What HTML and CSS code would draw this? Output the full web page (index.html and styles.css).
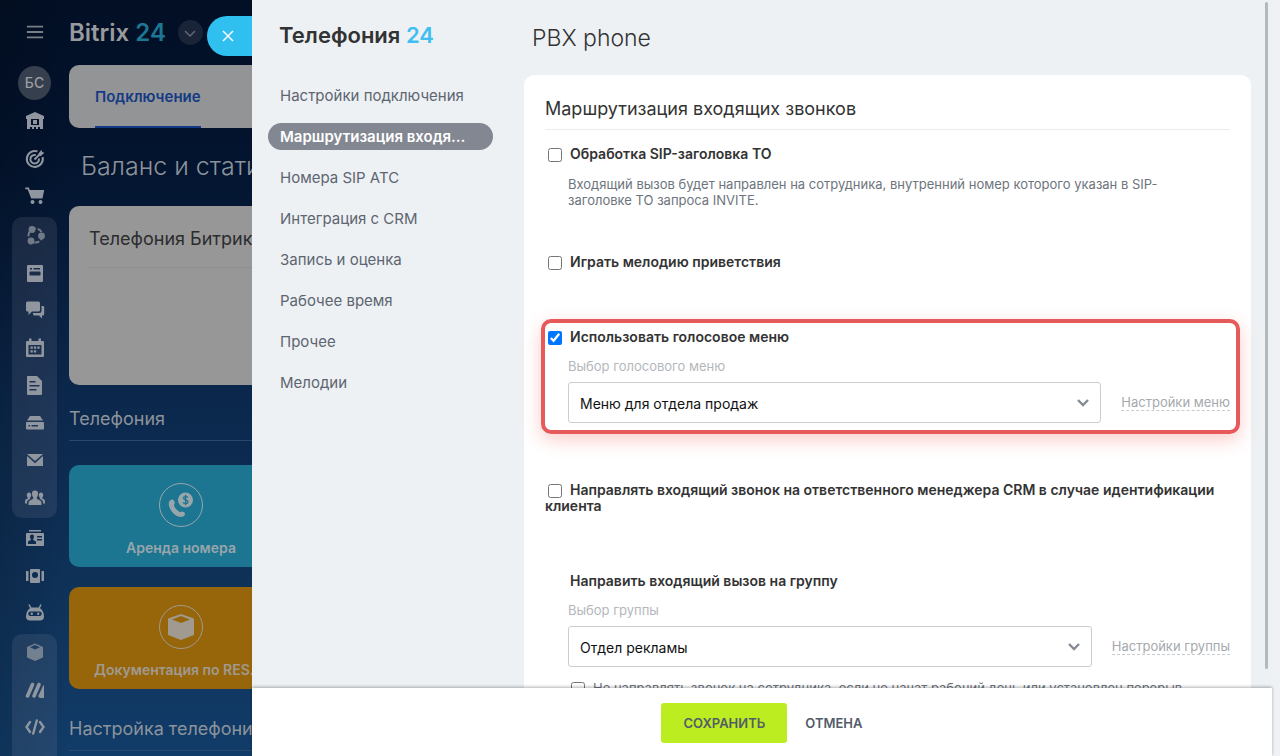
FILE: index.html
```html
<!DOCTYPE html>
<html lang="ru">

<head>
    <meta charset="UTF-8">
    <title>Телефония 24</title>
    <link rel="stylesheet" href="styles.css">
</head>

<body>
    <nav class="rail">
        <button class="rail-burger" aria-label="Меню">
            <svg viewBox="0 0 20 20"><path d="M1 4h18M1 10h18M1 16h18" fill="none" stroke="currentColor" stroke-width="2"/></svg>
        </button>
        <div class="rail-avatar">БС</div>

        <div class="rail-top">
            <a href="#" aria-label="Компания"><svg viewBox="0 0 20 20"><path fill-rule="evenodd" d="M10 1 19 5v3h-1v10h-3v-2h-2v2h-2v-2H9v2H7v-2H5v2H2V8H1V5zM6 8v6h8V8zM8 9h4v4H8z"/></svg></a>
            <a href="#" aria-label="Цели"><svg viewBox="0 0 20 20"><g fill="none" stroke="currentColor" stroke-width="2"><path d="M12.500 2.400A8 8 0 1 0 17.600 8"/><path d="M10.800 6.100A4.300 4.300 0 1 0 13.900 9.500"/><path d="M9.500 10.500 17 3"/></g><path d="M13.500 4.500 16.500.8l.6 2.300 2.300.6-3.500 3.200-2.200-.2z"/></svg></a>
            <a href="#" aria-label="Магазин"><svg viewBox="0 0 20 20"><path d="M.3 1.500H3.800L4.800 4h14.400l-1.700 8.500H6.200L2.600 3.200H.3z"/><circle cx="7.500" cy="16" r="2"/><circle cx="15.500" cy="16" r="2"/></svg></a>
        </div>

        <div class="rail-group rail-group-tools">
            <a href="#" class="dim" aria-label="Группы"><svg viewBox="0 0 20 20"><circle cx="10.500" cy="10.500" r="7" fill="none" stroke="currentColor" stroke-width="2" stroke-dasharray="5 2"/><circle cx="7" cy="4.500" r="3.400"/><circle cx="16.500" cy="11" r="3.400"/><circle cx="6" cy="16" r="3.400"/></svg></a>
            <a href="#" aria-label="Лента"><svg viewBox="0 0 20 20"><path fill-rule="evenodd" d="M3 2h14a1 1 0 0 1 1 1v15a1 1 0 0 1-1 1H3a1 1 0 0 1-1-1V3a1 1 0 0 1 1-1zM5 5v1.500h2V5zM8.500 5v1.500H15V5zM5.500 8.500a1 1 0 0 0-1 1v2a1 1 0 0 0 1 1h9a1 1 0 0 0 1-1v-2a1 1 0 0 0-1-1z"/></svg></a>
            <a href="#" aria-label="Чат"><svg viewBox="0 0 20 20"><path d="M2.500 1.500h11a1.500 1.500 0 0 1 1.500 1.500v7a1.500 1.500 0 0 1-1.500 1.500H7L3.500 15v-3.500h-1A1.500 1.500 0 0 1 1 10V3a1.500 1.500 0 0 1 1.500-1.500z"/><path d="M16.500 6H18a1.200 1.200 0 0 1 1.200 1.200V14a1.500 1.500 0 0 1-1.500 1.500h-.7v3l-3-3H9.500A1.500 1.500 0 0 1 8 14v-1h6.500a2 2 0 0 0 2-2z"/></svg></a>
            <a href="#" aria-label="Календарь"><svg viewBox="0 0 20 20"><path fill-rule="evenodd" d="M4 .5h2.500V3h7V.5H16V3h2a1 1 0 0 1 1 1v14a1 1 0 0 1-1 1H2a1 1 0 0 1-1-1V4a1 1 0 0 1 1-1h2zM3.500 7v9.500h13V7z"/><path d="M5.500 8.500h2.300v2.300H5.500zM8.900 8.500h2.300v2.300H8.900zM12.300 8.500h2.300v2.300h-2.300zM5.500 12.200h2.300v2.300H5.500zM8.900 12.200h2.300v2.300H8.900z"/></svg></a>
            <a href="#" aria-label="Документы"><svg viewBox="0 0 20 20"><path fill-rule="evenodd" d="M2 1h10l5 5v13a1 1 0 0 1-1 1H3a1 1 0 0 1-1-1zM4.500 6v1.500h6V6zM4.500 10v1.500h10V10zM4.500 14v1.500h7V14z"/></svg></a>
            <a href="#" aria-label="Диск"><svg viewBox="0 0 20 20"><path d="M5 3h10l3 4.500H2z"/><path fill-rule="evenodd" d="M2 9h16a1 1 0 0 1 1 1v5.500a1 1 0 0 1-1 1H2a1 1 0 0 1-1-1V10a1 1 0 0 1 1-1zM3.500 12v1.500H5V12zM6.500 12v1.500H13V12z"/></svg></a>
            <a href="#" aria-label="Почта"><svg viewBox="0 0 20 20"><path d="M2 4h16l-8 7z"/><path d="M2 6v10h16V6l-8 7.200z"/></svg></a>
            <a href="#" aria-label="Сотрудники"><svg viewBox="0 0 20 20"><path d="M10 2.500a3 3 0 0 1 3 3.200c0 1.800-.6 2.800-1.200 3.500v1.500l3.700 2c.8.500 1 1.200 1 4.300h-13c0-3.100.2-3.800 1-4.300l3.700-2V9.200C7.600 8.500 7 7.500 7 5.700a3 3 0 0 1 3-3.200z"/><path d="M4 4.500c1.500 0 2.200 1 2.200 2.500 0 1.300-.5 2-1 2.500v1.300L3 12.300c-.9.700-1 1.500-1 3.200H0c0-3 .1-3.800 1-4.200l1.700-.9v-1C2.200 8.900 1.800 8.200 1.800 7c0-1.500.7-2.500 2.200-2.500zM16 4.500c1.500 0 2.200 1 2.200 2.500 0 1.200-.4 1.900-.9 2.400v1l1.700.9c.9.400 1 1.200 1 4.200h-2c0-1.700-.1-2.500-1-3.200l-2.200-1.500V9.500c-.5-.5-1-1.200-1-2.500 0-1.500.7-2.500 2.200-2.500z"/></svg></a>
        </div>

        <div class="rail-middle">
            <a href="#" aria-label="Контакты"><svg viewBox="0 0 20 20"><path d="M4 2h12v1.500H4z"/><path fill-rule="evenodd" d="M2 5h16a1 1 0 0 1 1 1v11a1 1 0 0 1-1 1H2a1 1 0 0 1-1-1V6a1 1 0 0 1 1-1zM7 6.500a2 2 0 0 0-2 2.200c0 1 .3 1.700.8 2.200v1L3 13.500V16h8v-2.500l-2.800-1.600v-1c.5-.5.8-1.200.8-2.200a2 2 0 0 0-2-2.200zM12 8v1.500h5V8zM12 11v1.500h5V11z"/></svg></a>
            <a href="#" aria-label="Витрина"><svg viewBox="0 0 20 20"><path fill-rule="evenodd" d="M6 3h8a1 1 0 0 1 1 1v12a1 1 0 0 1-1 1H6a1 1 0 0 1-1-1V4a1 1 0 0 1 1-1zM10 6a3 3 0 1 0 0 6 3 3 0 0 0 0-6z"/><path d="M1 5h2.500v10H1zM16.500 5H19v10h-2.500z"/></svg></a>
            <a href="#" aria-label="Роботы"><svg viewBox="0 0 20 20"><path d="M4 1.500 6 5.500M16 1.500l-2 4" stroke="currentColor" stroke-width="1.500"/><path fill-rule="evenodd" d="M6 4.500h8c3 1.500 5 5 5 9 0 2.500-1.500 4-4 4H5c-2.500 0-4-1.500-4-4 0-4 2-7.500 5-9zM5.500 8.500a2.200 2.200 0 0 0 0 4.500h9a2.200 2.200 0 0 0 0-4.500z"/><circle cx="6.800" cy="10.700" r="1.200"/><circle cx="13.200" cy="10.700" r="1.200"/></svg></a>
        </div>

        <div class="rail-group rail-group-apps">
            <a href="#" class="dim" aria-label="Маркет"><svg viewBox="0 0 20 20"><path fill-rule="evenodd" d="M10 1.500 18 5v10.500L10 19l-8-3.500V5zM10 3 5 5.200l5 2.300 5-2.300z"/></svg></a>
            <a href="#" aria-label="Сайты"><svg viewBox="0 0 20 20"><path d="M2.500 16 7.500 4.500M9 16 14 4.500" stroke="currentColor" stroke-width="3.600" stroke-linecap="round"/><path d="M13.500 15.500 18 6c.8-1.500 1-.8 1 0v12h-3c-2 0-3-1-2.500-2.500z"/></svg></a>
            <a href="#" aria-label="Разработчикам"><svg viewBox="0 0 20 20"><path d="M5 5 1.500 10 5 15M15 5l3.500 5-3.500 5M11.800 3.500 8.200 16.500" fill="none" stroke="currentColor" stroke-width="2.400" stroke-linecap="round"/></svg></a>
        </div>
    </nav>

    <main class="portal">
        <div class="brand">
            <span class="brand-name">Bitrix <b>24</b></span>
            <button class="brand-more" aria-label="Ещё">
                <svg viewBox="0 0 12 12"><path d="m1 4 5 5 5-5" fill="none" stroke="currentColor" stroke-width="1.500"/></svg>
            </button>
        </div>
        <div class="tabs"><a href="#" class="tab">Подключение</a></div>
        <h1 class="portal-title">Баланс и статистика</h1>
        <section class="balance"><h2>Телефония Битрикс24</h2></section>
        <h2 class="portal-heading">Телефония</h2>
        <div class="tiles">
            <a href="#" class="tile tile-rent">
                <svg viewBox="0 0 44 44"><circle cx="22" cy="22" r="21.500" fill="none" stroke="currentColor"/><path d="M11 17.500c1.700-1.700 3.400-1.200 4.200.5s.7 3-.3 4c1 3.200 3.200 5.600 6.200 7.200 1.200-1 2.600-.9 4 .1s1.200 2.800-.6 3.900c-3.600 2-8.400-.2-11.700-4.700S9 19.500 11 17.500z"/><circle cx="26.500" cy="17" r="7.500"/><path class="dollar" d="M29 14.500c-.8-1.200-4.500-1.400-4.500.6 0 2.400 4.400 1 4.400 3.600 0 2.300-4 2.200-4.900.6M26.600 11.800v10.400" fill="none" stroke-width="1.300"/></svg>
                <span>Аренда номера</span>
            </a>
            <a href="#" class="tile tile-docs">
                <svg viewBox="0 0 44 44"><circle cx="22" cy="22" r="21.500" fill="none" stroke="currentColor"/><path fill-rule="evenodd" d="m22 9 13 4.500V30l-13 5-13-5V13.500zm0 2-9 3.500 9 3.500 9-3.500z"/></svg>
                <span>Документация по REST API</span>
            </a>
        </div>
        <h2 class="portal-heading">Настройка телефонии</h2>
    </main>

    <div class="slider">
        <button class="slider-close" aria-label="Закрыть">
            <svg viewBox="0 0 12 12"><path d="m1 1 10 10M11 1 1 11" fill="none" stroke="currentColor" stroke-width="1.500"/></svg>
        </button>

        <div class="slider-body">
            <aside class="menu">
                <h2 class="menu-title">Телефония <b>24</b></h2>
                <a href="#">Настройки подключения</a>
                <a href="#" class="active">Маршрутизация входящих звонков</a>
                <a href="#">Номера SIP АТС</a>
                <a href="#">Интеграция с CRM</a>
                <a href="#">Запись и оценка</a>
                <a href="#">Рабочее время</a>
                <a href="#">Прочее</a>
                <a href="#">Мелодии</a>
            </aside>

            <section class="content">
                <h1 class="content-title">PBX phone</h1>
                <form class="card" id="routing">
                    <h2 class="card-title">Маршрутизация входящих звонков</h2>

                    <div class="option">
                        <label class="option-label"><input type="checkbox">Обработка SIP-заголовка ТО</label>
                        <p class="option-text">Входящий вызов будет направлен на сотрудника, внутренний номер которого указан в SIP-заголовке ТО запроса INVITE.</p>
                    </div>

                    <div class="option">
                        <label class="option-label"><input type="checkbox">Играть мелодию приветствия</label>
                    </div>

                    <div class="option option-marked">
                        <label class="option-label"><input type="checkbox" checked>Использовать голосовое меню</label>
                        <label class="field-label" for="ivr">Выбор голосового меню</label>
                        <div class="field-row">
                            <select id="ivr">
                                <option>Меню для отдела продаж</option>
                            </select>
                            <a href="#">Настройки меню</a>
                        </div>
                    </div>

                    <div class="option">
                        <label class="option-label"><input type="checkbox">Направлять входящий звонок на ответственного менеджера CRM в случае идентификации клиента</label>
                    </div>

                    <div class="option">
                        <h3 class="group-title">Направить входящий вызов на группу</h3>
                        <label class="field-label" for="group">Выбор группы</label>
                        <div class="field-row">
                            <select id="group">
                                <option>Отдел рекламы</option>
                            </select>
                            <a href="#">Настройки группы</a>
                        </div>
                        <label class="sub-option"><input type="checkbox">Не направлять звонок на сотрудника, если не начат рабочий день или установлен перерыв</label>
                    </div>
                </form>
            </section>
            <div class="scroll-thumb"></div>
        </div>

        <footer class="actions">
            <button class="btn-save" form="routing">Сохранить</button>
            <button class="btn-cancel" type="button">Отмена</button>
        </footer>
    </div>
</body>

</html>
```

FILE: styles.css
```css
* {
    box-sizing: border-box;
}

body {
    margin: 0;
    height: 100vh;
    display: flex;
    overflow: hidden;
    font-family: Inter, "Liberation Sans", sans-serif;
    font-size: 13px;
    line-height: 16px;
    color: #333;
    background: linear-gradient(#020f25, #03142f 22%, #0b274c 52%, #0f3259 78%, #113c69);
}

h1,
h2,
h3,
p {
    margin: 0;
    font-weight: 400;
}

a {
    color: inherit;
    text-decoration: none;
}

button {
    padding: 0;
    border: none;
    font-family: inherit;
    cursor: pointer;
}

svg {
    display: block;
    fill: currentColor;
}

/* left icon rail */
.rail {
    flex: none;
    width: 69px;
    display: flex;
    flex-direction: column;
    align-items: center;
    padding-top: 22px;
    color: #8f969f;
    background: linear-gradient(90deg, rgba(0, 0, 0, 0.15), rgba(0, 0, 0, 0));
}

.rail svg {
    width: 20px;
    height: 20px;
}

.rail-burger {
    background: none;
    color: #777e88;
}

.rail-burger svg {
    padding: 1px;
}

.rail-avatar {
    width: 33px;
    height: 34px;
    margin-top: 24px;
    border-radius: 50%;
    background: #363f4e;
    color: #999da3;
    font-size: 14px;
    font-weight: 500;
    line-height: 34px;
    text-align: center;
}

.rail-top,
.rail-middle,
.rail-group {
    flex: none;
    width: 45px;
    display: flex;
    flex-direction: column;
    align-items: center;
    justify-content: space-between;
}

.rail-top {
    height: 117px;
    padding: 11px 0;
}

.rail-middle {
    height: 116px;
    padding: 10px 0 11px;
}

.rail-group {
    border-radius: 10px;
    background: rgba(150, 150, 170, 0.15);
}

.rail-group-tools {
    height: 301px;
    padding: 8px 0 10px;
}

.rail-group-apps {
    height: 140px;
    padding: 8px 0 37px;
}

.dim {
    opacity: 0.75;
}

/* dimmed page behind the slider */
.portal {
    flex: none;
    width: 183px;
    overflow: hidden;
    white-space: nowrap;
    color: #8c939b;
}

.brand {
    display: flex;
    align-items: center;
    gap: 12px;
    height: 65px;
}

.brand-name {
    font-size: 24px;
    font-weight: 600;
    line-height: 30px;
    color: #989a9d;
}

.brand-name b {
    font-weight: 600;
    color: #1d7692;
}

.brand-more {
    width: 25px;
    height: 25px;
    border-radius: 50%;
    display: flex;
    align-items: center;
    justify-content: center;
    background: #192438;
    color: #5f6874;
}

.brand-more svg {
    width: 12px;
    height: 12px;
}

.tabs {
    width: 240px;
    height: 63px;
    padding-left: 26px;
    border-radius: 10px;
    background: #939495;
}

.tab {
    display: inline-block;
    height: 63px;
    border-bottom: 2px solid #143a85;
    color: #143a85;
    font-size: 15px;
    font-weight: 600;
    line-height: 64px;
}

.portal-title {
    margin: 22px 0 24px 12px;
    font-size: 25px;
    font-weight: 300;
    line-height: 32px;
}

.balance {
    width: 240px;
    height: 179px;
    padding: 21px 20px;
    border-radius: 10px;
    background: #979797;
    color: #2b2c2e;
}

.balance h2 {
    padding-bottom: 16px;
    border-bottom: 1px solid #8c8e90;
    font-size: 18px;
    line-height: 24px;
}

.portal-heading {
    margin-top: 22px;
    padding-bottom: 9px;
    border-bottom: 1px solid #294869;
    font-size: 18px;
    line-height: 24px;
}

.tiles {
    display: grid;
    gap: 20px;
    margin: 24px 0 28px;
}

.tile {
    width: 224px;
    height: 102px;
    display: flex;
    flex-direction: column;
    align-items: center;
    gap: 12px;
    padding-top: 18px;
    border-radius: 10px;
    color: #98a5ab;
    font-size: 14px;
    font-weight: 600;
    line-height: 18px;
}

.tile svg {
    width: 44px;
    height: 44px;
}

.tile span {
    max-width: 174px;
    overflow: hidden;
    text-overflow: ellipsis;
}

.tile-rent {
    background: #1c7691;
}

.tile-docs {
    background: #97650a;
    color: #a09a90;
}

.dollar {
    stroke: #1c7691;
}

/* slider panel */
.slider {
    flex: 1;
    min-width: 0;
    position: relative;
    display: flex;
    flex-direction: column;
    border-right: 8px solid #eff1f4;
    background: #edf1f4;
}

.slider-close {
    position: absolute;
    top: 16px;
    right: 100%;
    width: 45px;
    height: 40px;
    padding-left: 15px;
    border-radius: 20px 0 0 20px;
    background: #2fc0f0;
    color: #fff;
}

.slider-close svg {
    width: 12px;
    height: 12px;
}

.slider-body {
    flex: 1;
    min-height: 0;
    position: relative;
    display: flex;
    overflow: hidden;
}

.scroll-thumb {
    position: absolute;
    top: 2px;
    right: 4px;
    bottom: 19px;
    width: 3px;
    border-radius: 2px;
    background: #b3b9bd;
}

.menu {
    flex: none;
    width: 241px;
    display: flex;
    flex-direction: column;
    gap: 14px;
    padding: 20px 0 0 16px;
    font-size: 15px;
    color: #5d6570;
}

.menu-title {
    padding: 0 11px;
    margin-bottom: 18px;
    color: #333;
    font-size: 22px;
    font-weight: 600;
    line-height: 30px;
}

.menu-title b {
    font-weight: 600;
    color: #3fbef2;
}

.menu a {
    height: 27px;
    padding: 0 20px 0 12px;
    border-radius: 14px;
    line-height: 27px;
    white-space: nowrap;
    overflow: hidden;
    text-overflow: ellipsis;
}

.menu .active {
    background: #828792;
    color: #fff;
    font-weight: 600;
}

.content {
    flex: 1;
    min-width: 0;
    padding: 22px 21px 0 31px;
}

.content-title {
    padding-left: 8px;
    margin-bottom: 21px;
    font-size: 23px;
    font-weight: 300;
    line-height: 32px;
}

.card {
    min-height: 100%;
    padding: 21px;
    border-radius: 10px;
    background: #fff;
}

.card-title {
    padding: 1px 0 8px;
    margin-bottom: 16px;
    border-bottom: 1px solid #eaecee;
    font-size: 18px;
    line-height: 24px;
}

.option {
    position: relative;
    margin-bottom: 59px;
}

.option:nth-of-type(1) {
    margin-bottom: 46px;
}

.option-label {
    display: block;
    font-size: 14px;
    font-weight: 600;
}

.option-label input,
.sub-option input {
    width: 14px;
    height: 14px;
    margin: -2px 8px -2px 3px;
    vertical-align: -3px;
}

.option-text {
    margin: 14px 23px 0;
    color: #6d747d;
}

.group-title {
    padding-left: 25px;
    font-size: 14px;
    font-weight: 600;
}

.field-label {
    display: block;
    margin: 13px 0 8px 23px;
    color: #b3b7bc;
}

.field-row {
    display: flex;
    align-items: center;
    gap: 20px;
    padding-left: 23px;
}

.field-row select {
    flex: 1;
    min-width: 0;
    height: 41px;
    padding: 2px 36px 0 11px;
    appearance: none;
    border: 1px solid #c9cdd2;
    border-radius: 3px;
    background: url("data:image/svg+xml,%3Csvg xmlns='http://www.w3.org/2000/svg' viewBox='0 0 12 8'%3E%3Cpath d='m1 1 5 5 5-5' fill='none' stroke='%23858b93' stroke-width='2.400'/%3E%3C/svg%3E") no-repeat right 11px center / 12px 8px #fff;
    color: #111;
    font-family: inherit;
    font-size: 14px;
}

.field-row a {
    border-bottom: 1px dashed #c8ccd0;
    color: #a5a9ae;
}

/* red outline round the selected option */
.option-marked::after {
    content: "";
    position: absolute;
    inset: -10px -10px -11px -4px;
    border: 4px solid #e75a5b;
    border-radius: 10px;
    box-shadow: 0 6px 18px rgba(240, 80, 70, 0.28);
    pointer-events: none;
}

.sub-option {
    display: block;
    margin-top: 13px;
    padding-left: 23px;
    color: #6d747d;
    white-space: nowrap;
}

.actions {
    flex: none;
    position: relative;
    display: flex;
    align-items: center;
    justify-content: center;
    gap: 18px;
    height: 68px;
    padding-top: 2px;
    background: #fff;
    box-shadow: 0 -1px 3px rgba(0, 0, 0, 0.3);
}

.actions button {
    color: #535c69;
    font-size: 13px;
    font-weight: 600;
    text-transform: uppercase;
}

.actions .btn-save {
    height: 40px;
    padding: 0 22px;
    border-radius: 3px;
    background: #bbed21;
}

.btn-cancel {
    background: none;
}
```
